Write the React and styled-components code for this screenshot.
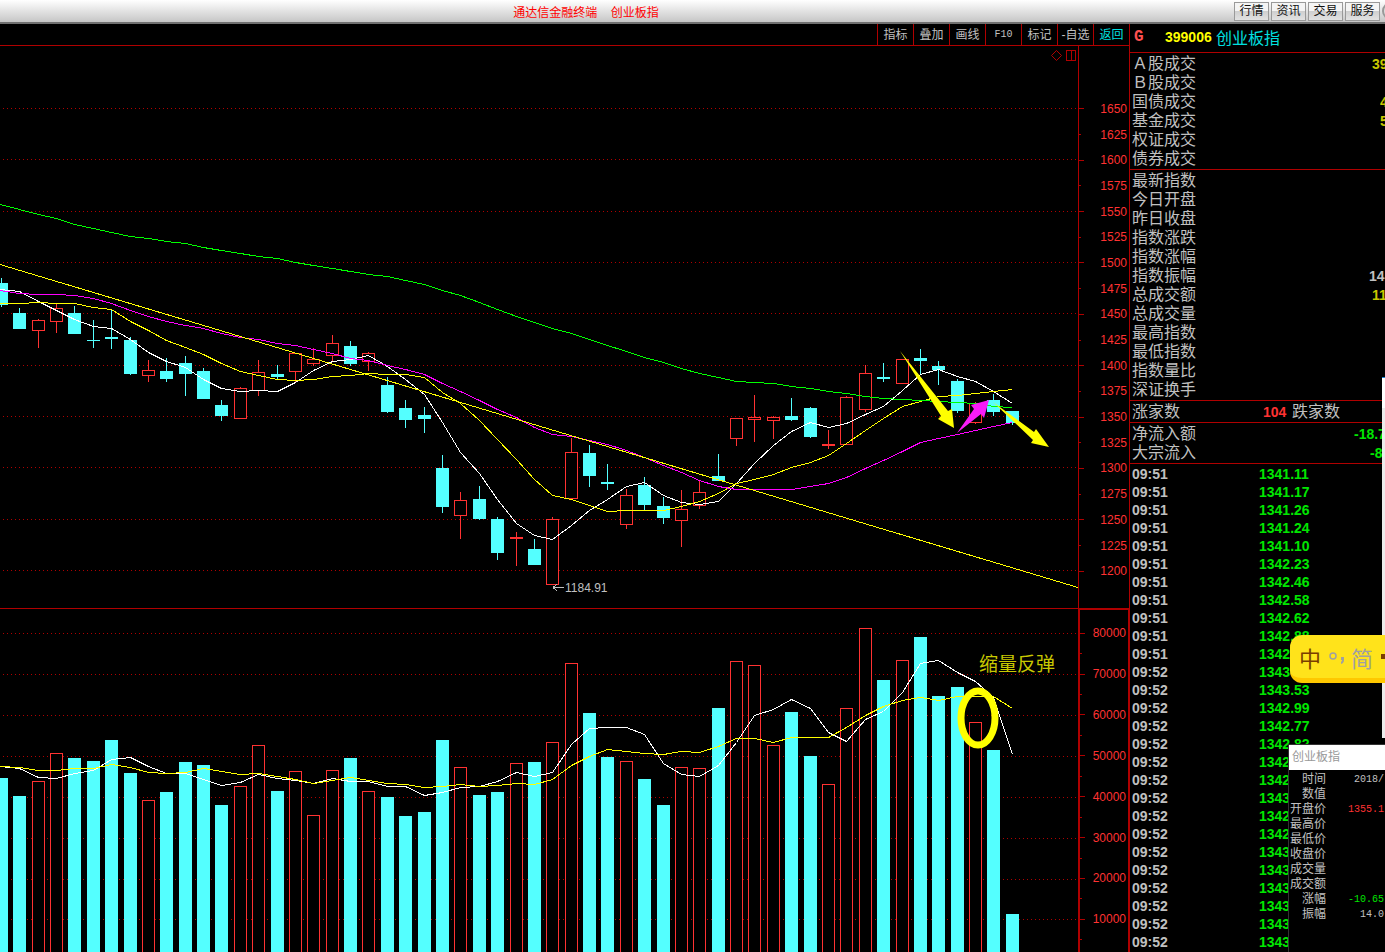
import React from 'react'
import styled, { createGlobalStyle } from 'styled-components'

const red = '#ff3232'
const line = '#b00000'
const cyan = '#54ffff'
const yellow = '#ffff00'
const green = '#00e600'
const grey = '#c0c0c0'
const gold = '#c8c800'

const sans = '"Liberation Sans", "Noto Sans CJK SC", sans-serif'
const mono = '"Liberation Mono", "Noto Sans CJK SC", monospace'

const GlobalStyle = createGlobalStyle`
  * {
    box-sizing: border-box;
  }

  body {
    margin: 0;
    background: #000;
    color: ${grey};
    font-family: ${sans};
    font-size: 12px;
  }

  button {
    font: inherit;
    padding: 0;
    cursor: pointer;
  }
`

const Page = styled.div`
  position: relative;
  display: flex;
  flex-direction: column;
  height: 100vh;
  overflow: hidden;
`

const TitleBar = styled.header`
  display: grid;
  grid-template-columns: 1fr 213px;
  align-items: center;
  flex: none;
  height: 24px;
  overflow: hidden;
  background: linear-gradient(#fff, #c6c6c6);
  border-bottom: 2px solid #707070;
`

const Title = styled.h1`
  margin: 0;
  font-size: 12px;
  font-weight: normal;
  text-align: center;
  white-space: pre;
  color: #f00;
`

const TopMenu = styled.nav`
  display: flex;
  justify-content: flex-end;
  gap: 2px;
  overflow: hidden;
`

const TopButton = styled.button`
  flex: none;
  width: 35px;
  height: 19px;
  line-height: 17px;
  border: 1px solid #999;
  background: linear-gradient(#f4f4f4 50%, #cfcfcf 50%, #e2e2e2);
  color: #111;
`

const MoreButton = styled.button`
  flex: none;
  width: 18px;
  height: 18px;
  margin-right: -15px;
  border: 2px solid #999;
  border-radius: 50%;
  background: #ddd;
`

const Main = styled.main`
  display: grid;
  grid-template-columns: minmax(0, 1fr) 256px;
  flex: 1;
  min-height: 0;
`

const Charts = styled.section`
  display: flex;
  flex-direction: column;
  min-height: 0;
`

const Toolbar = styled.div`
  display: flex;
  justify-content: flex-end;
  flex: none;
  height: 22px;
  border-bottom: 1px solid ${line};
`

const ToolButton = styled.button`
  width: 36px;
  border: 0;
  border-left: 1px solid ${line};
  background: none;
  color: ${p => p.$color || grey};
  font-family: ${p => (p.$mono ? mono : sans)};
  font-size: ${p => (p.$mono ? 10 : 12)}px;
  line-height: 20px;
  white-space: nowrap;
`

const Pane = styled.div`
  display: flex;
  flex: ${p => p.$grow} 1 0;
  min-height: 0;
  border-bottom: ${p => (p.$divider ? `1px solid ${line}` : 0)};
`

const Plot = styled.svg`
  display: block;
  flex: 1;
  min-width: 0;
  height: 100%;
  shape-rendering: crispEdges;
`

const Axis = styled.div`
  display: flex;
  flex-direction: column;
  flex: none;
  width: 51px;
  border: 0 solid ${line};
  border-left-width: 1px;
`

const PriceAxis = styled(Axis)`
  padding: 50px 0 24px;
`

const VolumeAxis = styled(Axis)`
  padding: 13px 0 2px;
  border-width: 1px 1px 0 2px;
`

const Step = styled.div`
  display: flex;
  align-items: center;
  justify-content: space-between;
  flex: 1 1 0;
  min-height: 0;
  padding-right: 2px;
  line-height: 12px;
  color: ${red};

  &::before {
    content: '';
    width: ${p => (p.$major ? 5 : 2)}px;
    height: 1px;
    background: ${line};
  }
`

const Sidebar = styled.aside`
  display: flex;
  flex-direction: column;
  min-height: 0;
  overflow: hidden;
  border-left: 1px solid ${line};
`

const Symbol = styled.h2`
  display: flex;
  align-items: center;
  flex: none;
  height: 29px;
  margin: 0;
  padding: 0 0 3px 4px;
  font-size: 16px;
  font-weight: normal;
  color: #00e0e0;
  border-bottom: 1px solid ${line};
`

const Flag = styled.span`
  width: 31px;
  font-family: ${mono};
  font-weight: bold;
  color: #ff5050;
`

const Code = styled.span`
  width: 51px;
  font-size: 14px;
  font-weight: bold;
  color: ${yellow};
`

const Quotes = styled.dl`
  flex: none;
  margin: 0;
  padding: 1px 0 1px 2px;
  border-bottom: 1px solid ${line};
`

const Quote = styled.div`
  display: flex;
  height: 19px;
  font-size: 16px;
  line-height: 20px;
`

const Name = styled.dt`
  white-space: nowrap;
`

const Value = styled.dd`
  flex: none;
  width: ${p => p.$width}px;
  margin: 0 0 0 auto;
  overflow: hidden;
  font-size: 14px;
  font-weight: bold;
  white-space: nowrap;
  color: ${p => p.$color};
`

const Breadth = styled(Quote)`
  display: grid;
  grid-template-columns: 131px 24px 1fr;
  column-gap: 0;

  dt:last-child {
    padding-left: 5px;
  }
`

const Ticks = styled.table`
  border-collapse: collapse;
  table-layout: fixed;
  width: 100%;
  margin-top: 1px;
  font-size: 14px;
  font-weight: bold;

  td {
    height: 18px;
    padding: 0 0 0 2px;
    line-height: 18px;
  }

  td:first-child {
    width: 127px;
  }

  td:last-child {
    color: ${green};
  }
`

const Edge = styled.div`
  position: absolute;
  top: 377px;
  right: 0;
  width: 3px;
  height: 361px;
  border-top: 1px solid #1883d7;
  background: linear-gradient(#fff 30px, #ececec 30px);
`

const InputBar = styled.div`
  position: absolute;
  top: 635px;
  right: 0;
  display: flex;
  align-items: center;
  width: 95px;
  height: 48px;
  padding: 0 0 0 9px;
  overflow: hidden;
  border-bottom: 5px solid #ffc800;
  border-radius: 12px 0 0 12px;
  background: #ffe31b;
  color: #a0a0a0;
  font-family: "Noto Sans CJK SC", sans-serif;
  font-size: 22px;
  line-height: 32px;

  button {
    flex: none;
    border: 0;
    background: none;
    color: inherit;
  }

  button:first-child {
    color: #7a3e00;
  }

  svg {
    flex: none;
    margin: 0 6px 0 8px;
  }

  i {
    flex: none;
    width: 8px;
    height: 5px;
    margin-left: 8px;
    background: #7a3e00;
  }
`

const Popup = styled.section`
  position: absolute;
  top: 744px;
  right: 0;
  bottom: 0;
  width: 97px;
  overflow: hidden;
  border-top: 1px solid #333;
  border-left: 1px solid #333;
  background: #000;
`

const PopupTitle = styled.h3`
  height: 25px;
  margin: 0 0 2px;
  padding-left: 3px;
  background: #fff;
  color: #999;
  font-size: 12px;
  font-weight: normal;
  line-height: 24px;
`

const Details = styled.table`
  width: 100%;
  border-collapse: collapse;

  th,
  td {
    height: 15px;
    padding: 0;
    line-height: 15px;
    font-weight: normal;
    text-align: right;
    white-space: nowrap;
  }

  th {
    width: 37px;
  }

  td {
    padding-right: 1px;
    font-family: ${mono};
    font-size: 10px;
  }
`

const Amount = styled.td`
  color: ${p => p.$color || grey};
`

// [rising, high, body top, body bottom, low]
const candles = [
  [0, 278, 283, 305, 307], [0, 308, 313, 329, 329], [1, 319, 320, 331, 348], [1, 304, 308, 322, 333],
  [0, 306, 313, 334, 334], [0, 320, 340, 341, 348], [0, 309, 337, 339, 349], [0, 337, 340, 374, 375],
  [1, 360, 370, 376, 382], [0, 358, 371, 379, 382], [0, 356, 363, 374, 396], [0, 368, 371, 399, 399],
  [0, 400, 405, 416, 421], [1, 387, 388, 419, 419], [1, 360, 372, 391, 396], [0, 365, 374, 377, 379],
  [1, 353, 353, 372, 383], [1, 348, 359, 364, 366], [1, 335, 343, 356, 361], [0, 341, 346, 364, 366],
  [1, 352, 353, 362, 371], [0, 377, 385, 412, 413], [0, 400, 408, 420, 428], [0, 407, 415, 419, 433],
  [0, 455, 468, 507, 513], [1, 492, 500, 516, 539], [0, 486, 499, 519, 520], [0, 517, 519, 553, 560],
  [1, 532, 537, 539, 566], [0, 539, 549, 565, 565], [1, 517, 519, 585, 585], [1, 438, 452, 499, 499],
  [0, 445, 453, 476, 487], [0, 464, 482, 484, 490], [1, 489, 495, 525, 529], [0, 477, 485, 505, 510],
  [0, 497, 506, 518, 524], [1, 490, 509, 521, 547], [1, 480, 492, 506, 509], [0, 454, 476, 481, 481],
  [1, 418, 418, 439, 446], [1, 395, 417, 420, 442], [1, 416, 417, 421, 439], [0, 398, 416, 420, 421],
  [0, 407, 408, 437, 438], [1, 430, 444, 446, 449], [1, 396, 397, 445, 445], [1, 365, 373, 410, 412],
  [0, 363, 377, 379, 382], [1, 359, 359, 384, 384], [0, 349, 358, 361, 374], [0, 361, 366, 370, 385],
  [0, 379, 381, 411, 413], [1, 402, 403, 423, 424], [0, 394, 400, 412, 416], [0, 411, 411, 423, 425],
]

const volumes = [
  778, 796, 781, 753, 758, 761, 740, 773, 800, 792, 762, 765, 805, 786, 745, 791, 771, 815, 770,
  758, 791, 797, 816, 812, 740, 767, 795, 792, 763, 762, 742, 663, 713, 757, 761, 779, 805, 767,
  768, 708, 661, 665, 745, 712, 756, 784, 708, 628, 680, 660, 637, 696, 687, 722, 750, 914,
]

const priceAverages = [
  ['#fff', [
    289, 291, 301, 310, 319, 326, 328, 339, 352, 361, 367, 379, 388, 391, 390, 391, 382, 370, 361,
    359, 355, 366, 379, 394, 422, 452, 473, 499, 523, 535, 539, 525, 510, 499, 486, 482, 495, 502,
    504, 501, 483, 463, 445, 431, 422, 427, 423, 414, 406, 390, 374, 369, 376, 381, 391, 403,
  ]],
  [yellow, [
    303, 303, 302, 303, 303, 307, 309, 321, 330, 340, 347, 354, 363, 371, 375, 379, 380, 379, 376,
    375, 373, 374, 374, 377, 392, 403, 420, 439, 459, 479, 495, 499, 505, 511, 510, 510, 510, 506,
    501, 493, 483, 479, 474, 467, 462, 455, 443, 430, 418, 406, 401, 396, 395, 393, 391, 389,
  ]],
  ['#ff00ff', [
    290, 293, 294, 294, 295, 298, 303, 310, 316, 321, 325, 328, 333, 337, 339, 343, 345, 349, 353,
    358, 360, 365, 369, 374, 383, 391, 400, 409, 417, 427, 434, 436, 440, 444, 450, 457, 465, 472,
    480, 486, 489, 489, 489, 489, 486, 483, 477, 468, 460, 451, 442, 438, 434, 430, 426, 422,
  ]],
  ['#00ff00', [
    204, 209, 214, 218, 224, 228, 232, 236, 238, 241, 243, 247, 250, 253, 256, 258, 262, 265, 268,
    271, 274, 276, 280, 284, 290, 295, 302, 309, 316, 322, 328, 333, 339, 345, 351, 357, 362, 368,
    373, 377, 381, 382, 383, 386, 388, 391, 393, 396, 398, 399, 400, 401, 402, 403, 406, 407,
  ]],
]

const volumeAverages = [
  ['#fff', [
    766, 768, 777, 778, 773, 770, 759, 757, 766, 773, 773, 779, 785, 782, 774, 778, 780, 783, 778,
    781, 781, 786, 786, 795, 792, 787, 786, 781, 772, 776, 772, 744, 728, 727, 727, 734, 763, 774,
    776, 765, 742, 715, 709, 699, 708, 732, 741, 719, 711, 692, 663, 660, 672, 681, 697, 754,
  ]],
  [yellow, [
    766, 767, 770, 770, 768, 768, 764, 767, 772, 773, 772, 768, 771, 774, 773, 776, 779, 783, 780,
    777, 780, 783, 784, 787, 786, 784, 786, 785, 783, 784, 779, 765, 756, 749, 751, 753, 754, 751,
    752, 746, 738, 738, 742, 737, 737, 737, 727, 715, 706, 700, 697, 700, 696, 696, 696, 708,
  ]],
]

const center = i => Math.round(0.9 + i * 18.38)

const priceLines = [108, 159, 211, 262, 313, 365, 416, 467, 519, 570]
const volumeLines = [633, 674, 715, 756, 797, 838, 879, 919]
const priceSteps = Array.from({ length: 19 }, (_, i) => 1650 - i * 25)
const volumeSteps = Array.from({ length: 16 }, (_, i) => 80000 - i * 5000)

// [label, visible value, color, visible width]
const turnover = [
  ['Ａ股成交', '39', gold, 13],
  ['Ｂ股成交'],
  ['国债成交', '4', gold, 5],
  ['基金成交', '5', gold, 5],
  ['权证成交'],
  ['债券成交'],
]

const indexQuotes = [
  ['最新指数'],
  ['今日开盘'],
  ['昨日收盘'],
  ['指数涨跌'],
  ['指数涨幅'],
  ['指数振幅', '14', grey, 16],
  ['总成交额', '11', gold, 13],
  ['总成交量'],
  ['最高指数'],
  ['最低指数'],
  ['指数量比'],
  ['深证换手'],
]

const flows = [
  ['净流入额', '-18.7', green, 31],
  ['大宗流入', '-8', green, 15],
]

const ticks = [
  '1341.11', '1341.17', '1341.26', '1341.24', '1341.10', '1342.23', '1342.46', '1342.58',
  '1342.62', '1342.88', '1342', '1343', '1343.53', '1342.99', '1342.77', '1342.82', '1342',
  '1342', '1343', '1342', '1342', '1343', '1343', '1343', '1343', '1343', '1343',
]

const details = [
  ['时间', '2018/'],
  ['数值'],
  ['开盘价', '1355.1', red],
  ['最高价'],
  ['最低价'],
  ['收盘价'],
  ['成交量'],
  ['成交额'],
  ['涨幅', '-10.65', green],
  ['振幅', '14.0'],
]

const GridLines = ({ rows }) =>
  rows.map(y => (
    <line key={y} x1="3" x2="1078" y1={y + 0.5} y2={y + 0.5} stroke={line} strokeDasharray="1 3"/>
  ))

const Averages = ({ series }) =>
  series.map(([color, values]) => (
    <polyline
      key={color}
      points={values.map((y, i) => `${i ? center(i) + 0.5 : 0},${y + 0.5}`).join(' ')}
      fill="none"
      stroke={color}
    />
  ))

const Box = ({ x, top, bottom, rising }) =>
  rising && bottom - top > 2 ? (
    <rect x={x - 5.5} y={top + 0.5} width="12" height={bottom - top - 1} fill="#000" stroke={red}/>
  ) : (
    <rect x={x - 6} y={top} width="13" height={bottom - top} fill={rising ? red : cyan}/>
  )

const Candle = ({ x, data: [rising, high, top, bottom, low] }) => (
  <g>
    <rect x={x} y={high} width="1" height={low - high} fill={rising ? red : cyan}/>
    <Box x={x} top={top} bottom={bottom} rising={rising}/>
  </g>
)

const PriceChart = () => (
  <Plot viewBox="0 46 1078 562" preserveAspectRatio="xMaxYMin slice" role="img" aria-label="创业板指">
    <GridLines rows={priceLines}/>
    {candles.map((data, i) => (
      <Candle key={i} x={center(i)} data={data}/>
    ))}
    <Averages series={priceAverages}/>
    <line x1="0" y1="264.5" x2="1078" y2="587.5" stroke={yellow}/>
    <g fill="none" stroke={line}>
      <path d="M1056.5 50.5l5 5l-5 5l-5-5z" shapeRendering="auto"/>
      <path d="M1066.5 50.5h9v10h-9zM1071.5 50.5v10"/>
    </g>
    <path d="M553 587.5h11M553 587.5l4-3M553 587.5l4 3" fill="none" stroke={grey}/>
    <text x="565" y="592" fill={grey} fontSize="12">1184.91</text>
    <g shapeRendering="auto">
      <path d="M900 351L948 411L952 409L954 428L938 419L941 416z" fill={yellow}/>
      <path d="M957 433L974 409L971 405L989 400L984 418L981 414z" fill="#f81cf8"/>
      <path d="M993 402L1034 432L1036 429L1049 447L1031 443L1033 440z" fill={yellow}/>
    </g>
  </Plot>
)

const VolumeChart = () => (
  <Plot viewBox="0 609 1078 343" preserveAspectRatio="xMaxYMin slice" role="img" aria-label="成交量">
    <GridLines rows={volumeLines}/>
    {volumes.map((top, i) => (
      <Box key={i} x={center(i)} top={top} bottom={960} rising={candles[i][0]}/>
    ))}
    <Averages series={volumeAverages}/>
    <ellipse cx="978" cy="718" rx="17" ry="27" fill="none" stroke={yellow} strokeWidth="7" shapeRendering="auto"/>
    <text x="979" y="671" fill="#c8c800" fontSize="19">缩量反弹</text>
  </Plot>
)

const QuoteList = ({ rows }) => (
  <Quotes>
    {rows.map(([name, value, color, width]) => (
      <Quote key={name}>
        <Name>{name}</Name>
        {value && <Value $color={color} $width={width}>{value}</Value>}
      </Quote>
    ))}
  </Quotes>
)

const App = () => (
  <Page>
    <GlobalStyle/>
    <TitleBar>
      <Title>{'通达信金融终端    创业板指'}</Title>
      <TopMenu>
        <TopButton>行情</TopButton>
        <TopButton>资讯</TopButton>
        <TopButton>交易</TopButton>
        <TopButton>服务</TopButton>
        <MoreButton aria-label="更多"/>
      </TopMenu>
    </TitleBar>
    <Main>
      <Charts>
        <Toolbar>
          <ToolButton>指标</ToolButton>
          <ToolButton>叠加</ToolButton>
          <ToolButton>画线</ToolButton>
          <ToolButton $mono>F10</ToolButton>
          <ToolButton>标记</ToolButton>
          <ToolButton>-自选</ToolButton>
          <ToolButton $color="#00e0e0">返回</ToolButton>
        </Toolbar>
        <Pane $grow={562} $divider>
          <PriceChart/>
          <PriceAxis>
            {priceSteps.map((price, i) => (
              <Step key={price} $major={i % 2 === 0}>{price}</Step>
            ))}
          </PriceAxis>
        </Pane>
        <Pane $grow={343}>
          <VolumeChart/>
          <VolumeAxis>
            {volumeSteps.map((volume, i) => (
              <Step key={volume} $major={i % 2 === 0}>{i % 2 === 0 && volume}</Step>
            ))}
          </VolumeAxis>
        </Pane>
      </Charts>
      <Sidebar>
        <Symbol>
          <Flag>G</Flag>
          <Code>399006</Code>
          创业板指
        </Symbol>
        <QuoteList rows={turnover}/>
        <QuoteList rows={indexQuotes}/>
        <Quotes>
          <Breadth>
            <Name>涨家数</Name>
            <Value $color={red} $width={24}>104</Value>
            <Name>跌家数</Name>
          </Breadth>
        </Quotes>
        <QuoteList rows={flows}/>
        <Ticks>
          <tbody>
            {ticks.map((price, i) => (
              <tr key={i}>
                <td>{i < 11 ? '09:51' : '09:52'}</td>
                <td>{price}</td>
              </tr>
            ))}
          </tbody>
        </Ticks>
      </Sidebar>
    </Main>
    <Edge/>
    <InputBar>
      <button>中</button>
      <svg width="16" height="16" viewBox="0 0 16 16" fill="none" stroke="#a0a0a0" strokeWidth="1.5">
        <circle cx="4" cy="7" r="3"/>
        <path d="M12 8h3v3q0 3-3 4v-2q1-1 1-2h-1z" fill="#a0a0a0" stroke="none"/>
      </svg>
      <button>简</button>
      <i/>
    </InputBar>
    <Popup>
      <PopupTitle>创业板指</PopupTitle>
      <Details>
        <tbody>
          {details.map(([name, value, color]) => (
            <tr key={name}>
              <th scope="row">{name}</th>
              <Amount $color={color}>{value}</Amount>
            </tr>
          ))}
        </tbody>
      </Details>
    </Popup>
  </Page>
)

export default App
